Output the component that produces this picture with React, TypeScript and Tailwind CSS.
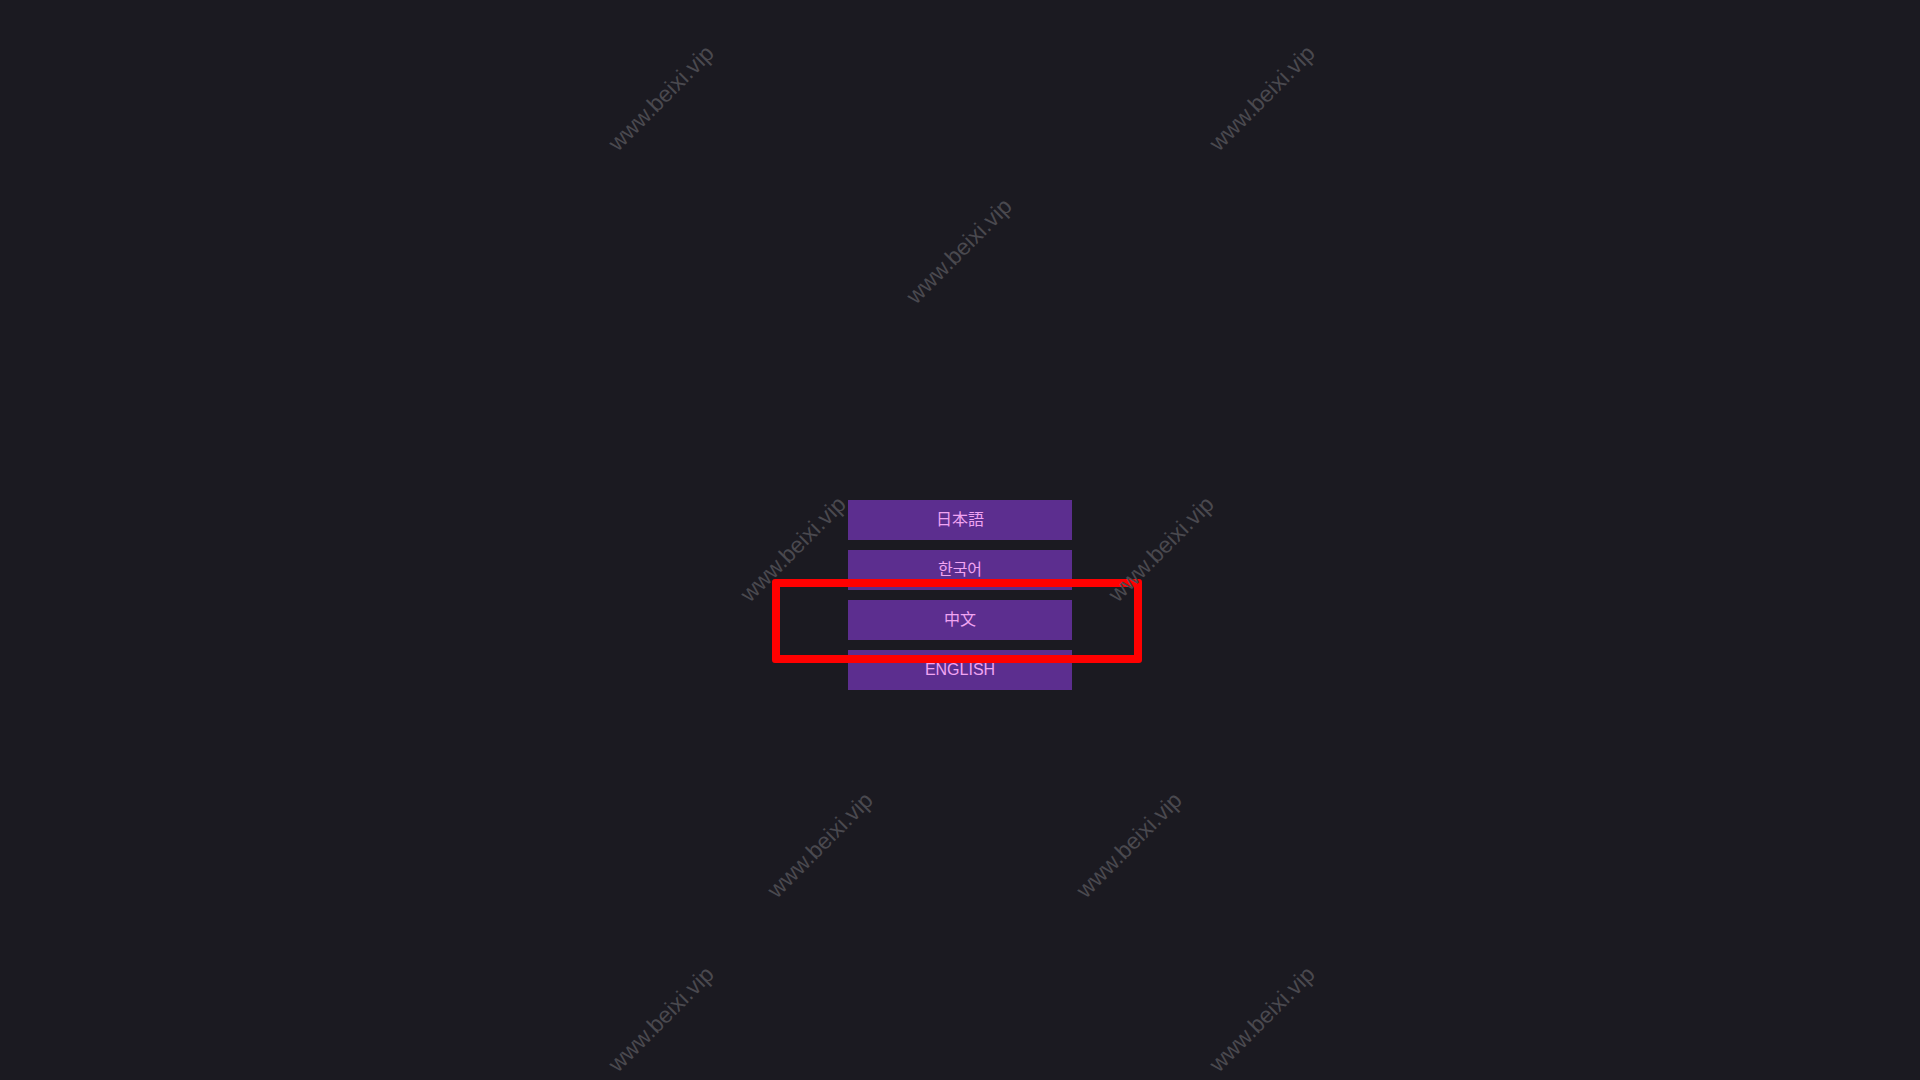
const marks = [
  { x: 661, y: 98 },
  { x: 1262, y: 98 },
  { x: 959, y: 251 },
  { x: 793, y: 549 },
  { x: 1161, y: 549 },
  { x: 820, y: 845 },
  { x: 1129, y: 845 },
  { x: 661, y: 1019 },
  { x: 1262, y: 1019 },
];

const langs = [
  { label: "日本語", font: "font-['Liberation_Sans','Noto_Sans_CJK_JP',sans-serif]" },
  { label: "한국어", font: "font-['Liberation_Sans','Noto_Sans_CJK_KR',sans-serif]" },
  { label: "中文", font: "font-['Liberation_Sans','Noto_Sans_CJK_SC',sans-serif]" },
  { label: "ENGLISH", font: "font-['Liberation_Sans',sans-serif]" },
];

export default function App() {
  return (
    <div className="relative h-[1080px] w-[1920px] overflow-hidden bg-[#1b1a21]">
      <div className="flex flex-col items-center gap-[10px] pt-[500px]">
        {langs.map((l) => (
          <button
            key={l.label}
            className={`flex h-[40px] w-[224px] items-center justify-center bg-[#5c2e8f] text-[16px] text-[#f0a4f2] ${l.font}`}
          >
            {l.label}
          </button>
        ))}
      </div>

      {/* highlight box */}
      <div className="pointer-events-none absolute top-[579px] left-[772px] h-[84px] w-[370px] rounded-[3px] border-[8px] border-[#ff0000]" />

      {marks.map((m, i) => (
        <div
          key={i}
          className="pointer-events-none absolute -translate-x-1/2 -translate-y-1/2 -rotate-45 font-['Liberation_Sans',sans-serif] text-[23px] whitespace-nowrap text-[#4a494f]"
          style={{ left: m.x, top: m.y }}
        >
          www.beixi.vip
        </div>
      ))}
    </div>
  );
}
